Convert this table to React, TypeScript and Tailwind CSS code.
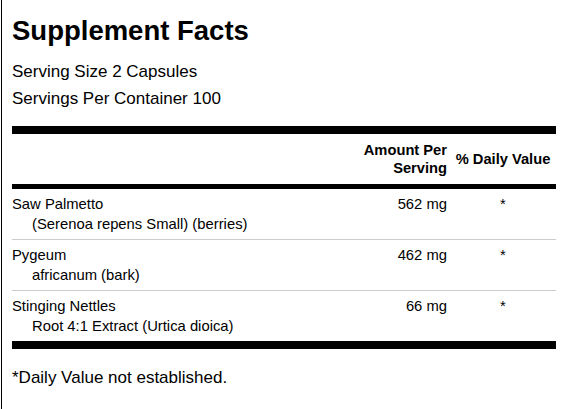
const ingredients = [
  { name: "Saw Palmetto", detail: "(Serenoa repens Small) (berries)", amount: "562 mg", dv: "*" },
  { name: "Pygeum", detail: "africanum (bark)", amount: "462 mg", dv: "*" },
  { name: "Stinging Nettles", detail: "Root 4:1 Extract (Urtica dioica)", amount: "66 mg", dv: "*" },
];

export default function App() {
  return (
    <div className="min-h-screen bg-white pl-[1px] font-['Liberation_Sans',Arial,sans-serif] text-black">
      <div className="min-h-[409px] border-l border-black pl-[10px] pr-[9px]">
        <h1 className="pt-[15px] text-[27.5px] font-bold leading-[32px]">Supplement Facts</h1>
        <div className="mt-[11px] text-[17px] leading-[27px]">
          <p>Serving Size 2 Capsules</p>
          <p>Servings Per Container 100</p>
        </div>

        <div className="mt-[14px] h-[8px] bg-black" />

        <div className="grid grid-cols-[1fr_auto_106px] items-center py-[7px] text-[14.7px] font-bold leading-[18px]">
          <div />
          <div className="pr-[3px] text-right">
            Amount Per
            <br />
            Serving
          </div>
          <div className="text-center">% Daily Value</div>
        </div>

        <div className="h-[5px] bg-black" />

        {ingredients.map((item, i) => (
          <div
            key={item.name}
            className={`grid grid-cols-[1fr_auto_106px] py-[5px] text-[14.8px] leading-[20px] ${
              i < ingredients.length - 1 ? "border-b border-[#cccccc]" : ""
            }`}
          >
            <div>
              <div>{item.name}</div>
              <div className="pl-[20px]">{item.detail}</div>
            </div>
            <div className="pr-[3px] text-right">{item.amount}</div>
            <div className="text-center">{item.dv}</div>
          </div>
        ))}

        <div className="h-[8px] bg-black" />

        <p className="mt-[15px] text-[17px] leading-[27px]">*Daily Value not established.</p>
      </div>
    </div>
  );
}
